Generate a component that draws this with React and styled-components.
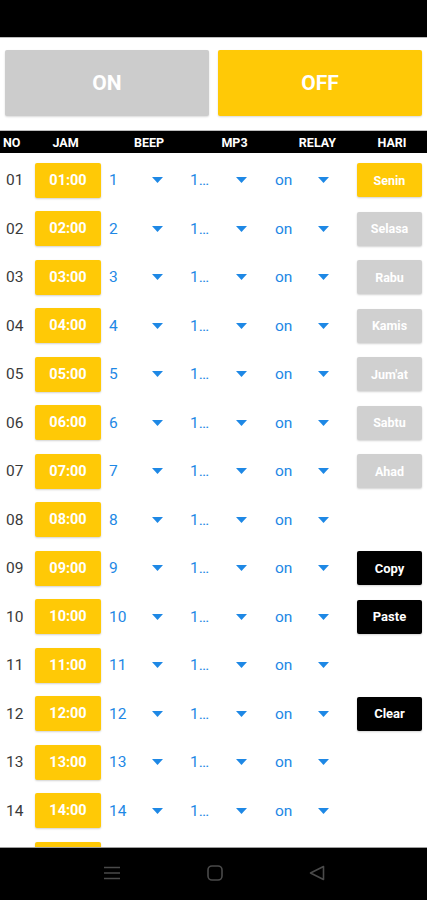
import React from "react";
import styled, { createGlobalStyle } from "styled-components";

const GlobalStyle = createGlobalStyle`
  html, body {
    margin: 0;
    padding: 0;
    background: #000;
  }
  body {
    font-family: Roboto, "Liberation Sans", sans-serif;
  }
`;

const days = ["Senin", "Selasa", "Rabu", "Kamis", "Jum'at", "Sabtu", "Ahad"];
const actions = { 9: "Copy", 10: "Paste", 12: "Clear" };

// 15th row only peeks out above the nav bar
const rows = Array.from({ length: 15 }, (_, i) => i + 1);
const pad = (n) => String(n).padStart(2, "0");

const Arrow = () => (
  <svg width="11" height="6" viewBox="0 0 11 6">
    <path d="M0 0 L11 0 L5.5 6 Z" fill="#1e88e5" />
  </svg>
);

const App = () => {
  return (
    <Screen>
      <GlobalStyle />
      <StatusBar />
      <Content>
        <Toggles>
          <BigButton color="#cccccc">ON</BigButton>
          <BigButton color="#ffc906">OFF</BigButton>
        </Toggles>
        <Header>
          <HeadCell w="35px" align="left">NO</HeadCell>
          <HeadCell w="61px">JAM</HeadCell>
          <HeadCell w="106px">BEEP</HeadCell>
          <HeadCell w="65px">MP3</HeadCell>
          <HeadCell w="101px">RELAY</HeadCell>
          <HeadCell w="48px">HARI</HeadCell>
        </Header>
        <List>
          {rows.map((n) => (
            <Row key={n}>
              <No>{n < 15 ? pad(n) : ""}</No>
              <TimeButton>{n < 15 ? `${pad(n)}:00` : ""}</TimeButton>
              {n < 15 && (
                <>
                  <Spinner w="54px" ml="8px">
                    <Value>{n}</Value>
                    <Arrow />
                  </Spinner>
                  <Spinner w="57px" ml="27px">
                    <Value>1…</Value>
                    <Arrow />
                  </Spinner>
                  <Spinner w="54px" ml="28px">
                    <Value>on</Value>
                    <Arrow />
                  </Spinner>
                  <Side>
                    {days[n - 1] && (
                      <DayButton active={n === 1}>{days[n - 1]}</DayButton>
                    )}
                    {actions[n] && <ActionButton>{actions[n]}</ActionButton>}
                  </Side>
                </>
              )}
            </Row>
          ))}
        </List>
      </Content>
      <NavBar>
        <svg width="18" height="14" viewBox="0 0 18 14">
          <path
            d="M1 1.5 H17 M1 7 H17 M1 12.5 H17"
            stroke="#4a4a4a"
            strokeWidth="1.6"
          />
        </svg>
        <svg width="16" height="16" viewBox="0 0 16 16">
          <rect
            x="1"
            y="1"
            width="14"
            height="14"
            rx="4"
            fill="none"
            stroke="#4a4a4a"
            strokeWidth="1.6"
          />
        </svg>
        <svg width="16" height="16" viewBox="0 0 16 16">
          <path
            d="M14.5 1.5 L1.5 8 L14.5 14.5 Z"
            fill="none"
            stroke="#4a4a4a"
            strokeWidth="1.6"
            strokeLinejoin="round"
          />
        </svg>
      </NavBar>
    </Screen>
  );
};

export default App;

const Screen = styled.div`
  width: 427px;
  height: 900px;
  display: flex;
  flex-direction: column;
  overflow: hidden;
  background: #fff;
`;

const StatusBar = styled.div`
  height: 37px;
  flex: none;
  background: #000;
  border-bottom: 1px solid #bdbdbd;
`;

const Content = styled.div`
  flex: 1;
  overflow: hidden;
  background: #fff;
`;

const Toggles = styled.div`
  display: flex;
  gap: 9px;
  padding: 12px 5px 0 5px;
  height: 66px;
`;

const BigButton = styled.div`
  flex: 1;
  background: ${(p) => p.color};
  color: #fff;
  font-weight: 700;
  font-size: 21px;
  display: flex;
  align-items: center;
  justify-content: center;
  border-radius: 2px;
  box-shadow: 0 1px 2px rgba(0, 0, 0, 0.15);
`;

const Header = styled.div`
  margin-top: 14px;
  height: 22px;
  background: #000;
  border-top: 1px solid #bdbdbd;
  display: flex;
  align-items: center;
`;

const HeadCell = styled.div`
  width: ${(p) => p.w};
  flex: none;
  color: #fff;
  font-weight: 700;
  font-size: 12.5px;
  text-align: ${(p) => p.align || "center"};
  padding-left: ${(p) => (p.align === "left" ? "3px" : "0")};
  box-sizing: border-box;
`;

const List = styled.div`
  padding-top: 3px;
`;

const Row = styled.div`
  height: 48.5px;
  display: flex;
  align-items: center;
`;

const No = styled.div`
  width: 35px;
  flex: none;
  box-sizing: border-box;
  padding-left: 6px;
  color: #3a3a3a;
  font-size: 15.5px;
`;

const TimeButton = styled.div`
  width: 66px;
  height: 35px;
  flex: none;
  background: #ffc906;
  color: #fff;
  font-weight: 700;
  font-size: 14.5px;
  display: flex;
  align-items: center;
  justify-content: center;
  border-radius: 2px;
  box-shadow: 0 1px 2px rgba(0, 0, 0, 0.18);
`;

const Spinner = styled.div`
  width: ${(p) => p.w};
  margin-left: ${(p) => p.ml};
  flex: none;
  display: flex;
  align-items: center;
  justify-content: space-between;
`;

const Value = styled.span`
  color: #1e88e5;
  font-size: 15.5px;
`;

const Side = styled.div`
  margin-left: 28px;
  width: 65px;
  flex: none;
`;

const SideButton = styled.div`
  height: 34px;
  display: flex;
  align-items: center;
  justify-content: center;
  color: #fff;
  font-weight: 700;
  font-size: 12.5px;
  border-radius: 2px;
  box-shadow: 0 1px 2px rgba(0, 0, 0, 0.18);
`;

const DayButton = styled(SideButton)`
  background: ${(p) => (p.active ? "#ffc906" : "#d0d0d0")};
`;

const ActionButton = styled(SideButton)`
  background: #000;
  font-size: 13px;
`;

const NavBar = styled.div`
  height: 50px;
  flex: none;
  background: #000;
  border-top: 1px solid #9e9e9e;
  display: flex;
  align-items: center;
  justify-content: center;
  gap: 86px;
  padding-bottom: 2px;
`;
